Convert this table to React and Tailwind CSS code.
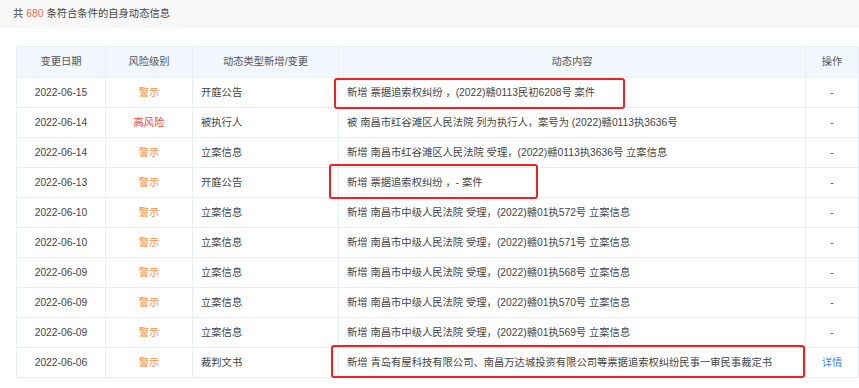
import React from "react";

const rows = [
  { date: "2022-06-15", risk: "警示", type: "开庭公告", content: "新增 票据追索权纠纷 ，(2022)赣0113民初6208号 案件", op: "-", box: "left-[-5px] top-0 w-[291px] h-[31px]" },
  { date: "2022-06-14", risk: "高风险", type: "被执行人", content: "被 南昌市红谷滩区人民法院 列为执行人，案号为 (2022)赣0113执3636号", op: "-" },
  { date: "2022-06-14", risk: "警示", type: "立案信息", content: "新增 南昌市红谷滩区人民法院 受理，(2022)赣0113执3636号 立案信息", op: "-" },
  { date: "2022-06-13", risk: "警示", type: "开庭公告", content: "新增 票据追索权纠纷 ，- 案件", op: "-", box: "left-[-10px] top-[-4px] w-[209px] h-[35px]" },
  { date: "2022-06-10", risk: "警示", type: "立案信息", content: "新增 南昌市中级人民法院 受理，(2022)赣01执572号 立案信息", op: "-" },
  { date: "2022-06-10", risk: "警示", type: "立案信息", content: "新增 南昌市中级人民法院 受理，(2022)赣01执571号 立案信息", op: "-" },
  { date: "2022-06-09", risk: "警示", type: "立案信息", content: "新增 南昌市中级人民法院 受理，(2022)赣01执568号 立案信息", op: "-" },
  { date: "2022-06-09", risk: "警示", type: "立案信息", content: "新增 南昌市中级人民法院 受理，(2022)赣01执570号 立案信息", op: "-" },
  { date: "2022-06-09", risk: "警示", type: "立案信息", content: "新增 南昌市中级人民法院 受理，(2022)赣01执569号 立案信息", op: "-" },
  { date: "2022-06-06", risk: "警示", type: "裁判文书", content: "新增 青岛有屋科技有限公司、南昌万达城投资有限公司等票据追索权纠纷民事一审民事裁定书", op: "详情", box: "left-[-8px] top-[-3px] w-[474px] h-[33px]" },
];

const cell = "border-r border-b border-[#e8eef7] h-[30px] p-0";

const App = () => {
  return (
    <div className="w-[859px] h-[388px] bg-white overflow-hidden text-[10.3px] text-[#444] font-['Liberation_Sans','Noto_Sans_CJK_SC',sans-serif]">
      <div className="h-[28px] bg-[#f8f8f9] pl-[13px] flex items-center text-[#444]">
        共 <span className="text-[#f56c4f] mx-[3px]">680</span> 条符合条件的自身动态信息
      </div>
      <div className="pt-[18px] pl-[16px]">
        <table className="border-collapse table-fixed w-[842px] border-l border-t border-[#e8eef7]">
          <colgroup>
            <col className="w-[89px]" />
            <col className="w-[87px]" />
            <col className="w-[146px]" />
            <col className="w-[467px]" />
            <col className="w-[53px]" />
          </colgroup>
          <thead>
            <tr className="bg-[#f2f7fd] text-[#555]">
              <th className={`${cell} h-[31px] font-normal text-center`}>变更日期</th>
              <th className={`${cell} h-[31px] font-normal text-center`}>风险级别</th>
              <th className={`${cell} h-[31px] font-normal text-center`}>动态类型新增/变更</th>
              <th className={`${cell} h-[31px] font-normal text-center`}>动态内容</th>
              <th className={`${cell} h-[31px] font-normal text-center`}>操作</th>
            </tr>
          </thead>
          <tbody>
            {rows.map((r, i) => (
              <tr key={i}>
                <td className={`${cell} text-center`}>{r.date}</td>
                <td className={`${cell} text-center ${r.risk === "高风险" ? "text-[#f0443c]" : "text-[#fb8a3c]"}`}>{r.risk}</td>
                <td className={`${cell} pl-2`}>{r.type}</td>
                <td className={`${cell} pl-2 relative whitespace-nowrap`}>
                  {r.content}
                  {r.box && <div className={`absolute ${r.box} border-2 border-[#ee2222] rounded-[3px]`} />}
                </td>
                <td className={`${cell} text-center ${r.op === "详情" ? "text-[#4a7ff5]" : "text-[#555]"}`}>{r.op}</td>
              </tr>
            ))}
          </tbody>
        </table>
      </div>
    </div>
  );
};

export default App;
